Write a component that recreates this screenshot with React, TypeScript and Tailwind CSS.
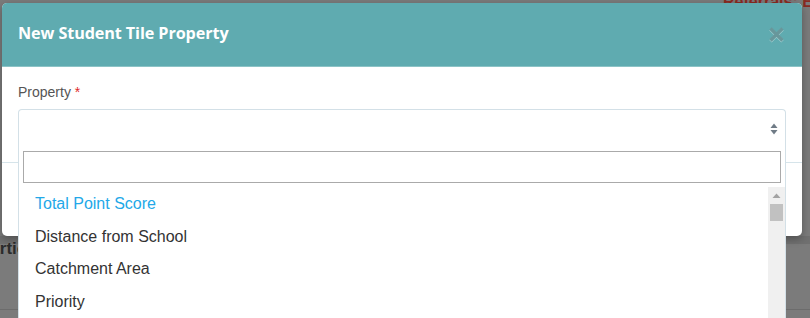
import React from "react";

const items = ["Total Point Score", "Distance from School", "Catchment Area", "Priority"];

export default function App() {
  return (
    <div className="relative w-[810px] h-[318px] overflow-hidden bg-[#7b7b7b] font-['Liberation_Sans',Arial,sans-serif]">
      {/* background page (under overlay) */}
      <div className="flex justify-end h-[236px] pr-[0px]">
        <div className="-mt-[10px] text-[16px] font-bold text-[#8a2a22] whitespace-nowrap w-[87px] overflow-hidden">Referrals: Ea</div>
      </div>
      <div className="h-[8px] bg-[#707070]" />
      <div className="h-[66px] border-b border-[#6c6c6c] flex items-start">
        <div className="-ml-[21px] mt-[-8px] text-[17px] font-bold text-[#2b2b2b]">Particular</div>
      </div>

      {/* modal */}
      <div className="absolute left-[2px] top-[3px] w-[800px] h-[233px] bg-white rounded-[5px] shadow-[0_3px_9px_rgba(0,0,0,0.3)]">
        <div className="h-[64px] bg-[#5fabb0] rounded-t-[5px] border-b border-[#8cc3c6] flex items-center justify-between pl-[16px] pr-[17px]">
          <div className="mb-[3px] text-[16.2px] font-bold text-white font-['Open_Sans',sans-serif] tracking-[-0.1px]">New Student Tile Property</div>
          <svg width="17" height="17" viewBox="0 0 17 17" className="mb-[1px]">
            <path d="M2.5 2.5 L14.5 14.5 M14.5 2.5 L2.5 14.5" stroke="#c9e3e5" strokeWidth="3.6" strokeLinecap="butt" opacity="0.6" transform="translate(0 0.8)" />
            <path d="M2.5 2.5 L14.5 14.5 M14.5 2.5 L2.5 14.5" stroke="#68979b" strokeWidth="3.2" strokeLinecap="butt" />
          </svg>
        </div>
        <div className="px-[16px] pt-[15px] pb-[15px] border-b border-[#d6e4ea]">
          <div className="text-[14px] leading-[20px] text-[#555]">
            Property <span className="text-[#e0282b]">*</span>
          </div>
          <div className="relative mt-[7px]">
            <div className="h-[38px] border border-b-0 border-[#d3e0e7] rounded-t-[4px] flex items-center justify-end pr-[7px]">
              <svg width="8" height="12" viewBox="0 0 8 12">
                <path d="M4 0.5 L7.5 5 L0.5 5 Z" fill="#6f7b86" />
                <path d="M4 11.5 L7.5 7 L0.5 7 Z" fill="#6f7b86" />
              </svg>
            </div>
            <div className="absolute left-0 right-0 top-full h-[200px] bg-white border-x border-[#d3e0e7] z-10">
              <div className="p-[4px]">
                <div className="h-[32px] border border-[#aaaaaa] bg-white" />
              </div>
              <div className="flex">
                <div className="flex-1 pt-[1px]">
                  {items.map((t, i) => (
                    <div
                      key={t}
                      className={
                        "h-[32.5px] leading-[32.5px] pl-[16px] text-[16px] " +
                        (i === 0 ? "text-[#23a8e8]" : "text-[#333]")
                      }
                    >
                      {t}
                    </div>
                  ))}
                </div>
                <div className="w-[17px] h-[140px] bg-[#f0f0f0] flex flex-col items-center">
                  <svg width="9" height="6" viewBox="0 0 9 6" className="mt-[6px]">
                    <path d="M4.5 0.5 L8.5 5 L0.5 5 Z" fill="#a3a3a3" />
                  </svg>
                  <div className="mt-[5px] w-[13px] h-[17px] bg-[#c1c1c1]" />
                </div>
              </div>
            </div>
          </div>
        </div>
      </div>
    </div>
  );
}
